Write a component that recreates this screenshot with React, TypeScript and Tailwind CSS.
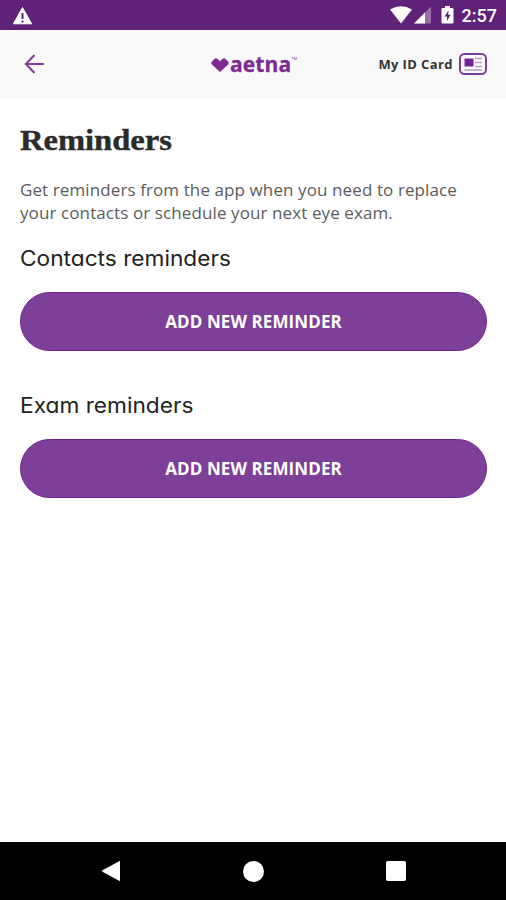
interface ReminderSectionProps {
  title: string
}

function StatusBar() {
  return (
    <div className="h-[30px] shrink-0 bg-[#602178] flex items-center justify-between pl-3 pr-[9px] text-white">
      <svg width="22" height="20" viewBox="0 0 22 20" className="mt-px">
        <path d="M10.500 1.500L19.600 17.800H1.400Z" fill="#fff" stroke="#fff" strokeLinejoin="round" />
        <path d="M9.500 7h2v6h-2zM9.500 14.400h2v2h-2z" fill="#602178" />
      </svg>
      <div className="flex items-center">
        <svg width="66" height="20" viewBox="0 0 66 20">
          <path d="M1 4.500Q12 -2 23 4.500L12 18.500Z" fill="#fff" />
          <path d="M25 18.500L42 1.500V18.500Z" fill="#fff" fillOpacity="0.35" />
          <path d="M25 18.500L36 7.500V18.500Z" fill="#fff" />
          <path d="M56 1h5v2h2.500q1 0 1 1v13.500q0 1-1 1h-10q-1 0-1-1V4q0-1 1-1H56Z" fill="#fff" />
          <path d="M59.500 5.500L55.500 11.500H58V16L61.500 9.800H59.200Z" fill="#602178" />
        </svg>
        <span className="ml-[7px] mt-px font-['Roboto',sans-serif] text-[18px] leading-5 font-medium">2:57</span>
      </div>
    </div>
  )
}

function AetnaLogo() {
  return (
    <div className="flex items-center text-[#7d2a92] mr-[3px]">
      <svg width="18" height="14" viewBox="0 0 18 14" fill="currentColor" className="mt-[2px]">
        <path d="M9 14L.9 6.500Q-.3 5 1 3.400L3.600 .8Q5 -.4 6.400 .8L9 3.200L11.600 .8Q13 -.4 14.400 .8L17 3.400Q18.300 5 17.100 6.500Z" />
      </svg>
      <span className="ml-px font-['Open_Sans',sans-serif] text-[21px] leading-6 font-bold tracking-[0.1px] [-webkit-text-stroke:0.3px_#7d2a92]">
        aetna
      </span>
      <span className="self-start mt-[5px] font-['Open_Sans',sans-serif] text-[4px] leading-none">TM</span>
    </div>
  )
}

function Header() {
  return (
    <header className="h-[69px] shrink-0 bg-[#f9f9f9] grid grid-cols-[1fr_auto_1fr] items-center pl-6 pr-[19px] pb-[2px]">
      <svg width="21" height="20" viewBox="0 0 21 20" fill="none" stroke="#7d3f98" strokeWidth="2">
        <path d="M10.500 1L1.800 10L10.500 19M2 10H20" />
      </svg>
      <AetnaLogo />
      <div className="flex items-center justify-end">
        <span className="mt-px font-['Open_Sans',sans-serif] text-[13px] leading-5 font-bold tracking-[0.4px] text-[#333] whitespace-nowrap">
          My ID Card
        </span>
        <svg width="28" height="22" viewBox="0 0 28 22" className="ml-[6px]">
          <rect x="1" y="1" width="26" height="20" rx="4.500" fill="#fff" stroke="#7d3f98" strokeWidth="2" />
          <rect x="5.500" y="5.500" width="9" height="8" fill="#6f2390" />
          <path d="M16 5.500h7M16 9.500h7M16 13.500h7M5.500 17h17.500" stroke="#b99ac8" strokeWidth="1.600" />
        </svg>
      </div>
    </header>
  )
}

function ReminderSection({ title }: ReminderSectionProps) {
  return (
    <section>
      <h2 className="origin-left scale-x-[1.08] font-['Inter',sans-serif] text-[21px] leading-7 font-normal text-[#222] [font-feature-settings:'cv11'] whitespace-nowrap">
        {title}
      </h2>
      <button
        type="button"
        className="mt-[19px] block w-full h-[59px] rounded-full border border-[#6f2390] bg-[#7d3f98] pt-px font-['Open_Sans',sans-serif] text-[17px] font-bold tracking-[0.1px] text-white"
      >
        ADD NEW REMINDER
      </button>
    </section>
  )
}

function NavBar() {
  return (
    <nav className="h-[58px] shrink-0 bg-black flex items-center justify-between pl-[101px] pr-[100px]">
      <svg width="20" height="22" viewBox="0 0 20 22" fill="#fff">
        <path d="M1.500 10.200L19 .8V21.200L1.500 11.800Q.6 11 1.500 10.200Z" />
      </svg>
      <span className="size-[21px] rounded-full bg-white" />
      <span className="size-5 rounded-[2px] bg-white" />
    </nav>
  )
}

export default function App() {
  return (
    <div className="w-full h-screen flex flex-col bg-white overflow-hidden">
      <StatusBar />
      <Header />
      <main className="flex-1 pl-5 pr-[19px] pt-[23px]">
        <h1 className="origin-left scale-x-[1.085] font-['Liberation_Serif',serif] text-[30px] leading-9 font-bold text-[#2b2b2b] [-webkit-text-stroke:0.4px_#2b2b2b]">
          Reminders
        </h1>
        <p className="mt-5 mb-[21px] font-['Open_Sans',sans-serif] text-[17px] leading-[23px] tracking-[0.1px] text-[#5c5c5c] whitespace-nowrap">
          Get reminders from the app when you need to replace
          <br />
          your contacts or schedule your next eye exam.
        </p>
        <div className="flex flex-col gap-[41px]">
          <ReminderSection title="Contacts reminders" />
          <ReminderSection title="Exam reminders" />
        </div>
      </main>
      <NavBar />
    </div>
  )
}
